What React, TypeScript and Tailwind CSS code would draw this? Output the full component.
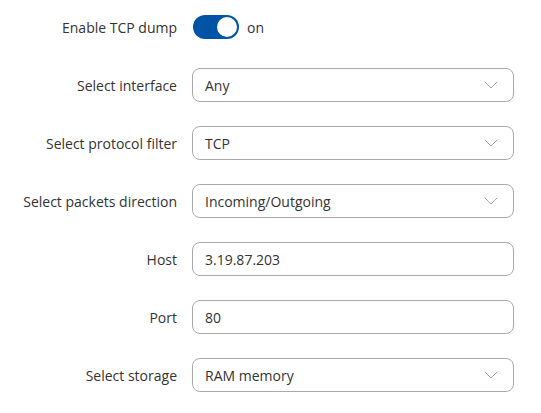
import { ChevronDown } from 'lucide-react'

const rows = [
  { label: 'Select interface', value: 'Any', select: true },
  { label: 'Select protocol filter', value: 'TCP', select: true },
  { label: 'Select packets direction', value: 'Incoming/Outgoing', select: true },
  { label: 'Host', value: '3.19.87.203', select: false },
  { label: 'Port', value: '80', select: false },
  { label: 'Select storage', value: 'RAM memory', select: true },
]

function Field({ value, select }: { value: string; select: boolean }) {
  return (
    <div className="w-[322px] h-[34px] border border-[#a9a9ad] rounded-[8px] flex items-center justify-between pl-[12px] pr-[10px] text-[14px] text-[#333]">
      <span>{value}</span>
      {select && <ChevronDown size={24} strokeWidth={0.9} className="text-[#9a9a9a]" />}
    </div>
  )
}

export default function App() {
  return (
    <div
      className="w-[541px] h-[413px] bg-white pt-[10px] flex flex-col gap-[24px]"
      style={{ fontFamily: '"Open Sans", sans-serif' }}
    >
      <div className="flex items-center h-[34px]">
        <div className="w-[177px] text-right text-[14px] text-[#333]">Enable TCP dump</div>
        <div className="ml-[16px] flex items-center gap-[8px]">
          <div className="w-[46px] h-[24px] rounded-full bg-[#0054a6] flex items-center justify-end pr-[2px]">
            <div className="w-[20px] h-[20px] rounded-full bg-white" />
          </div>
          <span className="text-[14px] text-[#333]">on</span>
        </div>
      </div>
      {rows.map((r) => (
        <div key={r.label} className="flex items-center h-[34px]">
          <div className="w-[177px] text-right text-[14px] text-[#333]">{r.label}</div>
          <div className="ml-[15px]">
            <Field value={r.value} select={r.select} />
          </div>
        </div>
      ))}
    </div>
  )
}
